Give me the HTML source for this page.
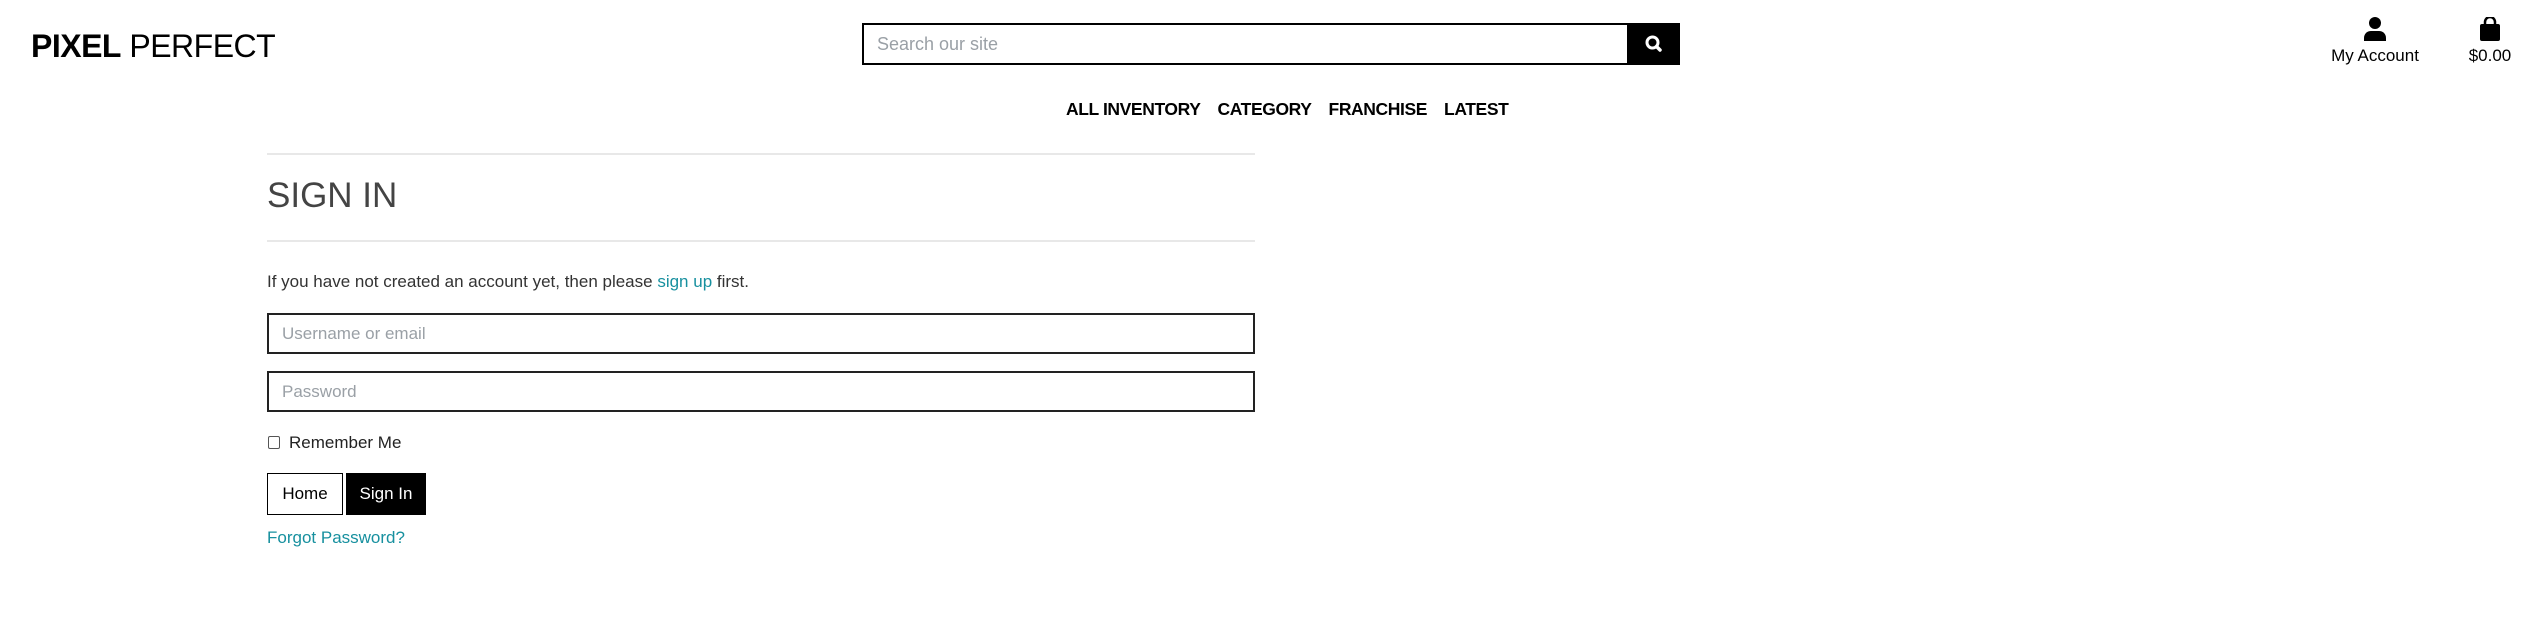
<!DOCTYPE html>
<html><head><meta charset="utf-8"><style>
*{box-sizing:border-box;margin:0;padding:0}
body{width:2541px;height:631px;background:#fff;font-family:"Liberation Sans",sans-serif;color:#000;position:relative;overflow:hidden}
.abs{position:absolute}
.logo{left:31px;top:26px;font-size:32px;letter-spacing:-0.5px;line-height:40px}
.search{left:862px;top:23px;width:818px;height:42px;border:2px solid #000}
.search span{position:absolute;left:13px;top:9px;font-size:18px;color:#9aa0a6}
.sbtn{left:1627px;top:23px;width:53px;height:42px;background:#000}
.nav{left:1066px;top:99px;font-size:17.5px;font-weight:bold;letter-spacing:-0.4px;white-space:nowrap}
.nav b{margin-right:17px}
.ico{text-align:center;font-size:17px}
.hr{left:267px;width:988px;height:2px;background:#e8e8e8}
h1{position:absolute;left:267px;top:176px;font-size:35px;font-weight:normal;color:#444;letter-spacing:0}
.p{left:267px;top:272px;font-size:17px;color:#333}
a{color:#17909f;text-decoration:none}
.inp{left:267px;width:988px;height:41px;border:2px solid #222}
.inp span{position:absolute;left:13px;top:9px;font-size:17px;color:#9aa0a6}
.btn{top:473px;height:42px;font-size:17px;line-height:42px;text-align:center}
</style></head><body>
<div class="abs logo"><b>PIXEL</b> PERFECT</div>
<div class="abs search"><span>Search our site</span></div>
<div class="abs sbtn"><svg width="53" height="42" viewBox="0 0 53 42"><circle cx="25.5" cy="19.5" r="5.5" fill="none" stroke="#fff" stroke-width="3"/><line x1="29.5" y1="23.5" x2="33" y2="27" stroke="#fff" stroke-width="3.5" stroke-linecap="round"/></svg></div>
<div class="abs nav"><b>ALL INVENTORY</b><b>CATEGORY</b><b>FRANCHISE</b><b style="margin:0">LATEST</b></div>
<div class="abs ico" style="left:2315px;top:17px;width:120px">
<svg width="22" height="24" viewBox="0 0 22 24"><circle cx="11" cy="6" r="6"/><path d="M0 24v-3c0-4 3-7 7-7h8c4 0 7 3 7 7v3z"/></svg>
<div style="margin-top:0">My Account</div></div>
<div class="abs ico" style="left:2450px;top:17px;width:80px">
<svg width="20" height="24" viewBox="0 0 20 24"><path d="M5 8V5a5 5 0 0 1 10 0v3" fill="none" stroke="#000" stroke-width="2.5"/><rect x="0" y="7" width="20" height="17" rx="2"/></svg>
<div style="margin-top:0">$0.00</div></div>
<div class="abs hr" style="top:153px"></div>
<h1>SIGN IN</h1>
<div class="abs hr" style="top:240px"></div>
<div class="abs p">If you have not created an account yet, then please <a>sign up</a> first.</div>
<div class="abs inp" style="top:313px"><span>Username or email</span></div>
<div class="abs inp" style="top:371px"><span>Password</span></div>
<div class="abs" style="left:268px;top:436px;width:12px;height:13px;border:1.5px solid #555;border-radius:2px"></div>
<div class="abs" style="left:289px;top:433px;font-size:17px;color:#222">Remember Me</div>
<div class="abs btn" style="left:267px;width:76px;border:1.5px solid #000;line-height:39px">Home</div>
<div class="abs btn" style="left:346px;width:80px;background:#000;color:#fff">Sign In</div>
<div class="abs" style="left:267px;top:528px;font-size:17px"><a>Forgot Password?</a></div>
</body></html>
